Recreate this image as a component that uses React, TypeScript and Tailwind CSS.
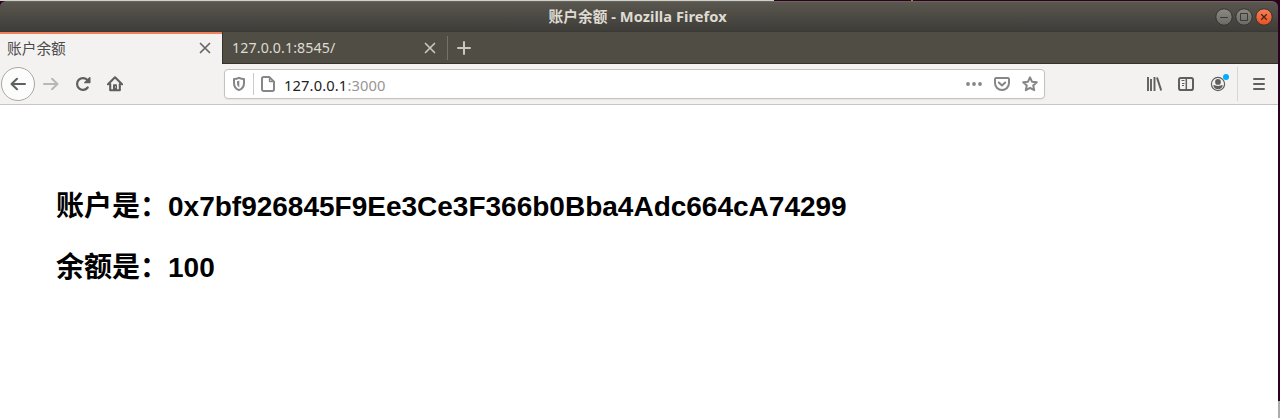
import React from "react";

function Svg({ children, className = "", size = 16 }: { children: React.ReactNode; className?: string; size?: number }) {
  return (
    <svg width={size} height={size} viewBox={`0 0 ${size} ${size}`} fill="none" stroke="currentColor" strokeWidth="2" strokeLinecap="round" strokeLinejoin="round" className={`block shrink-0 ${className}`}>
      {children}
    </svg>
  );
}

function WindowButton({ kind }: { kind: "min" | "max" | "close" }) {
  const close = kind === "close";
  return (
    <svg width="18" height="18" viewBox="0 0 18 18" fill="none" className="block">
      <defs>
        <linearGradient id={`fill-${kind}`} x1="0" y1="0" x2="0" y2="1">
          <stop offset="0" stopColor={close ? "#f68058" : "#8b8982"} />
          <stop offset="1" stopColor={close ? "#e7511f" : "#6b6963"} />
        </linearGradient>
      </defs>
      <circle cx="9" cy="9" r="8.2" fill={`url(#fill-${kind})`} stroke="#35342f" strokeWidth="1" />
      {kind === "min" && <path d="M5 9.5h8" stroke="#3c3b37" />}
      {kind === "max" && <path d="M5.5 5.5h7v7h-7z" stroke="#3c3b37" />}
      {close && <path d="M6.200 6.200l5.600 5.600M11.800 6.200l-5.600 5.600" stroke="#4a2416" strokeWidth="1.3" />}
    </svg>
  );
}

function TitleBar() {
  return (
    <header className="grid h-[30px] shrink-0 grid-cols-[1fr_auto_1fr] items-center rounded-t-[6px] border-t border-[#67665c] bg-linear-to-b from-[#59574e] to-[#3e3d39] pr-[5px]">
      <span />
      <h1 className="w-[180px] whitespace-nowrap pl-[2px] text-[14.7px] font-bold leading-[29px] tracking-[0.03px] text-[#dfdbd2]">账户余额 - Mozilla Firefox</h1>
      <div className="flex justify-end gap-[2px]">
        <WindowButton kind="min" />
        <WindowButton kind="max" />
        <WindowButton kind="close" />
      </div>
    </header>
  );
}

function CloseIcon({ className = "" }: { className?: string }) {
  return (
    <Svg size={12} className={className}>
      <path d="M1.500 1.500l9 9M10.500 1.500l-9 9" strokeWidth="1.700" />
    </Svg>
  );
}

function TabBar() {
  return (
    <div className="flex h-[33px] shrink-0 border-t border-[#3a3934] bg-[#504d45]">
      <div className="flex w-[222px] items-center justify-between border-t-2 border-[#f08055] bg-[#f4f2f0] pb-[2px] pl-[7px] pr-[11px] text-[#4c4c4c]">
        <span className="text-[14.7px] leading-none">账户余额</span>
        <CloseIcon className="text-[#666664]" />
      </div>
      <div className="flex flex-1 items-center border-b border-l border-[#33322d] text-[#dfdbd2]">
        <span className="w-[191px] pl-[9px] pt-[2px] text-[14.2px] leading-none tracking-[0.12px]">127.0.0.1:8545/</span>
        <span className="pl-[10px] text-[#c9c6be]"><CloseIcon /></span>
        <span className="ml-[11px] h-[24px] w-px bg-[#74726b]" />
        <Svg className="ml-[8px] text-[#cbc8c0]"><path d="M8 2v12M2 8h12" /></Svg>
      </div>
    </div>
  );
}

function UrlBar() {
  return (
    <div className="ml-[101px] flex h-[30px] w-[821px] items-center rounded-[4px] border border-[#c5c1bd] bg-white pl-[6px] pr-[6px] text-[#868686] shadow-[0_1px_2px_rgba(0,0,0,0.06)]">
      <Svg>
        <path d="M8 1.8c1.7.8 3.4 1.1 5 1.1v4c0 3.600-1.700 5.900-5 7.200-3.300-1.300-5-3.600-5-7.200v-4c1.600 0 3.300-.300 5-1.100z" />
        <path d="M8.300 4.600c-.800.300-1.600.500-2.300.600v2.100c0 1.900.700 3.200 2.300 4.100z" fill="currentColor" stroke="none" />
      </Svg>
      <span className="ml-[6px] h-[22px] w-px bg-[#cbcbcb]" />
      <Svg className="ml-[6px]">
        <path d="M3.700 1h5.500L14 5.700v7.600c0 1-.700 1.700-1.700 1.700H3.700c-1 0-1.700-.700-1.700-1.700V2.700C2 1.700 2.700 1 3.700 1z" />
        <path d="M9.500 1.500v4h4" strokeWidth="1.300" />
      </Svg>
      <span className="ml-[8px] flex-1 whitespace-nowrap pt-[2px] text-[14.7px] leading-[28px] tracking-[0.13px] text-[#222]">
        127.0.0.1<span className="text-[#969696]">:3000</span>
      </span>
      <div className="flex gap-[12px]">
        <Svg><g fill="currentColor" stroke="none"><circle cx="2" cy="8" r="1.900" /><circle cx="8" cy="8" r="1.900" /><circle cx="14" cy="8" r="1.900" /></g></Svg>
        <Svg>
          <path d="M2.200 2h11.600c.700 0 1.200.500 1.200 1.200V7a7 7 0 0 1-14 0V3.200C1 2.500 1.500 2 2.200 2z" />
          <path d="M4.800 6.500L8 9.500l3.200-3" />
        </Svg>
        <Svg><path d="M8 1.300l2 4.400 4.800.500-3.600 3.200 1 4.800L8 11.800l-4.200 2.400 1-4.800L1.200 6.200 6 5.700z" strokeWidth="2" /></Svg>
      </div>
    </div>
  );
}

function NavBar() {
  return (
    <nav className="flex h-[41px] shrink-0 items-center border-b border-[#c9c5c1] bg-[#f4f2f0] pl-px text-[#5f5f5d]">
      <div className="flex size-[34px] items-center justify-center rounded-full border border-[#aaa7a3] bg-[#fcfcfc]">
        <Svg><path d="M15 8H1.700M7 2.700L1.500 8 7 13.300" /></Svg>
      </div>
      <Svg className="ml-[8px] text-[#b9b7b5]"><path d="M1 8h13.300M9 2.700L14.500 8 9 13.300" /></Svg>
      <Svg className="ml-[16px]">
        <path d="M12.600 4.300A5.900 5.900 0 1 0 12.700 11.500" strokeWidth="2.200" />
        <path d="M14.800 1c.500 0 .700.300.700.700v5c0 .300-.200.500-.500.500H9.700c-.600 0-.800-.600-.400-1l5-5c.200-.200.300-.200.500-.200z" fill="currentColor" stroke="none" />
      </Svg>
      <Svg className="ml-[16px]">
        <path d="M1 8.300l7-7 7 7M3.200 8v6.300h9.600V8" strokeWidth="2.100" />
        <path d="M6 14.500V9.300c0-.600.400-1 1-1h2c.600 0 1 .400 1 1v5.200z" fill="currentColor" stroke="none" />
        <path d="M8.500 10.500v1" stroke="#f4f2f0" strokeWidth="1" strokeLinecap="butt" />
      </Svg>
      <UrlBar />
      <div className="ml-[101px] flex items-center gap-[16px]">
        <Svg>
          <g strokeLinecap="butt"><path d="M2 1v14M5 3v12M8.500 1v14" strokeWidth="1.900" /><path d="M11 1.500l4.200 13" /></g>
        </Svg>
        <Svg>
          <rect x="1" y="2" width="14" height="12" rx="1.800" />
          <path d="M8.300 2v12" strokeWidth="1.500" />
          <path d="M3.500 4.500h3M4 7.500h2.500M4 9.500h2" strokeWidth="1" strokeLinecap="butt" />
        </Svg>
        <div className="relative">
          <Svg>
            <circle cx="8" cy="8" r="6.600" strokeWidth="1.200" />
            <g fill="currentColor" stroke="none"><circle cx="8" cy="5.900" r="2.900" /><path d="M3.300 9.200c1.200-.500 2 .800 4.700.800s3.500-1.300 4.700-.800c-.400 2.400-2.300 4-4.700 4s-4.300-1.600-4.700-4z" /></g>
          </Svg>
          <span className="absolute left-[13px] top-[-2px] size-[6px] rounded-full bg-[#00adff]" />
        </div>
      </div>
      <span className="ml-[11px] h-[34px] w-px bg-[#d8d5d2]" />
      <Svg className="ml-[13px]"><path d="M3 3h10M3 8h10M3 13h10" /></Svg>
    </nav>
  );
}

export default function App() {
  return (
    <div className="flex h-[418px] w-[1280px] flex-col overflow-hidden bg-[#2c001e] font-['Noto_Sans','Noto_Sans_CJK_SC',sans-serif]">
      <div className="flex h-px shrink-0">
        <div className="w-[774px] bg-[#cfcfcc]" />
        <div className="ml-[137px] w-[2px] bg-[#c47635]" />
      </div>
      <div className="flex min-h-0 flex-1">
        <div className="flex w-[1278px] flex-col">
          <TitleBar />
          <TabBar />
          <NavBar />
          <main className="flex-1 bg-white pl-[56px] pt-[81px] font-['Liberation_Sans','Noto_Sans_CJK_SC',sans-serif] text-[28px] font-bold leading-[42px] text-black">
            <p className="whitespace-nowrap">账户是：0x7bf926845F9Ee3Ce3F366b0Bba4Adc664cA74299</p>
            <p className="mt-[19px] whitespace-nowrap">余额是：100</p>
          </main>
        </div>
        <div className="flex w-[2px] flex-col justify-end">
          <div className="h-[17px] bg-[#acacac]" />
        </div>
      </div>
    </div>
  );
}
